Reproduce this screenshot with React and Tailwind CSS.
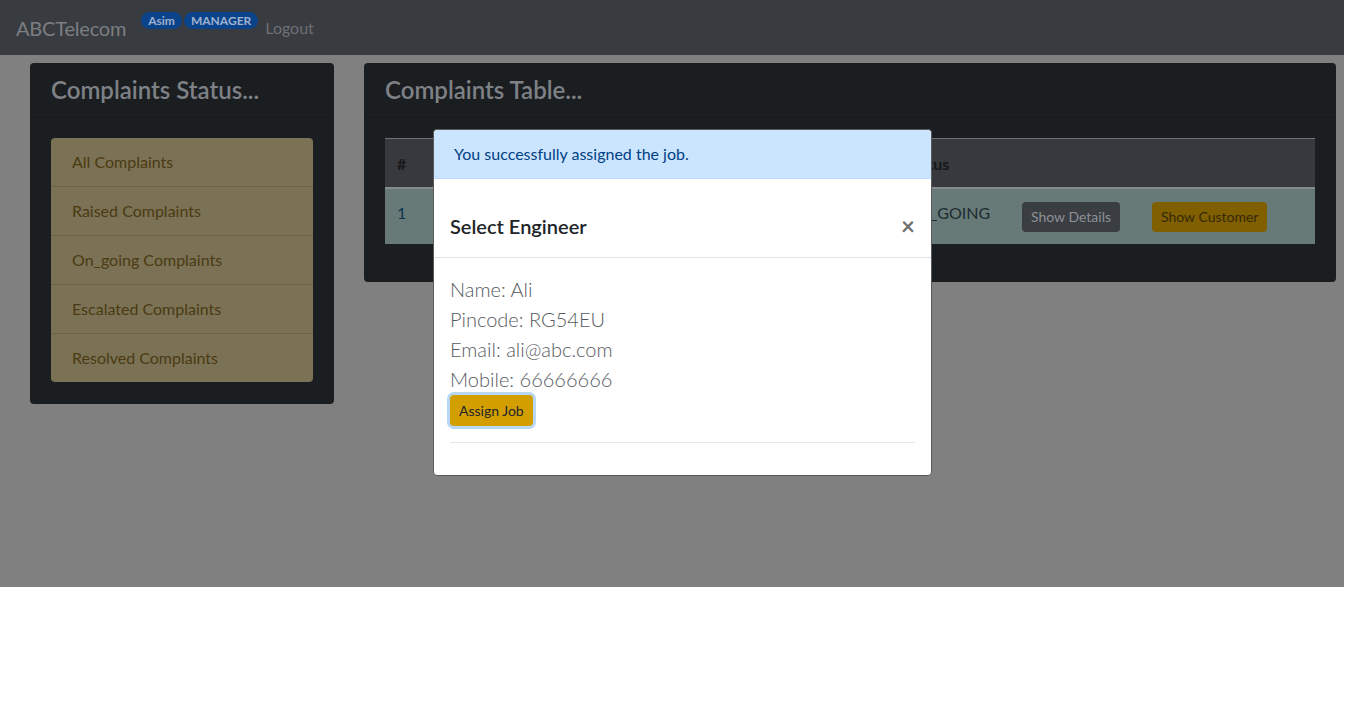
const font = { fontFamily: '"Segoe UI", Lato, "Noto Sans", sans-serif' };

const statuses = [
  "All Complaints",
  "Raised Complaints",
  "On_going Complaints",
  "Escalated Complaints",
  "Resolved Complaints",
];

function Navbar() {
  return (
    <nav className="flex h-[55px] items-center bg-[#383b40] px-4">
      <span className="text-[20px] tracking-[-0.2px] text-[#7c7e82]">ABCTelecom</span>
      <div className="ml-[15px] flex -translate-y-[7px] items-center gap-[2px]">
        <span className="rounded-full bg-[#0b438b] px-[7px] py-[1px] text-[12px] font-bold leading-[15px] text-[#9fb1cf]">
          Asim
        </span>
        <span className="rounded-full bg-[#0b438b] px-[7px] py-[1px] text-[12px] font-bold leading-[15px] text-[#9fb1cf]">
          MANAGER
        </span>
      </div>
      <span className="ml-[7px] text-[16px] text-[#6e7074]">Logout</span>
    </nav>
  );
}

function Card({ title, className = "", children }) {
  return (
    <section className={`rounded-[4px] bg-[#1b1e21] ${className}`}>
      <div className="border-b border-[#17191b] px-[21px] py-[12px]">
        <h4 className="text-[24px] font-semibold leading-[30px] text-[#7e8185]">{title}</h4>
      </div>
      <div className="px-[21px] pt-[20px] pb-[22px]">{children}</div>
    </section>
  );
}

function StatusList() {
  return (
    <ul className="overflow-hidden rounded-[4px] bg-[#7b7155]">
      {statuses.map((s, i) => (
        <li
          key={s}
          className={`px-[21px] py-[12px] text-[16px] leading-[24px] text-[#4a3b12] ${
            i > 0 ? "border-t border-[#6c6449]" : ""
          }`}
        >
          {s}
        </li>
      ))}
    </ul>
  );
}

function ComplaintsTable() {
  return (
    <div className="mb-[16px]">
      <div className="flex h-[49px] items-center border-t border-[#6f7276] bg-[#37393e] pt-[2px] text-[16px] font-bold text-[#161718]">
        <span className="w-[508px] pl-[12px]">#</span>
        <span className="pl-[12px]">Status</span>
      </div>
      <div className="flex h-[57px] border-t-2 border-[#878c8b] bg-[#677a77] text-[16px] leading-[24px]">
        <span className="w-[508px] pl-[12px] pt-[12px] text-[#0d3550]">1</span>
        <span className="w-[117px] pl-[12px] pt-[12px] text-[#1c2b30]">ON_GOING</span>
        <div className="w-[130px] pl-[12px] pt-[13px]">
          <button className="h-[30px] rounded-[4px] bg-[#3a3d42] px-[9px] text-[14px] text-[#8d9196]">
            Show Details
          </button>
        </div>
        <div className="pl-[12px] pt-[13px]">
          <button className="h-[30px] rounded-[4px] bg-[#7f5f00] px-[9px] text-[14px] text-[#35290a]">
            Show Customer
          </button>
        </div>
      </div>
    </div>
  );
}

function EngineerModal() {
  return (
    <div className="absolute left-[433px] top-[129px] w-[499px] rounded-[4px] border border-[#5a5a5a] bg-white">
      <div className="rounded-t-[4px] border-b border-[#b8daff] bg-[#cce5ff] px-[20px] py-[12px] text-[16px] leading-[24px] text-[#004085]">
        You successfully assigned the job.
      </div>
      <div className="mt-[16px] flex items-center justify-between border-b border-[#dee2e6] px-[16px] py-[16px]">
        <h5 className="text-[20px] font-semibold leading-[30px] text-[#212529]">Select Engineer</h5>
        <span className="text-[24px] font-bold leading-[24px] text-[#707070]">×</span>
      </div>
      <div className="p-[16px]">
        <div className="text-[20px] font-light leading-[30px] text-[#565a5e]">
          <p>Name: Ali</p>
          <p>Pincode: RG54EU</p>
          <p>Email: ali@abc.com</p>
          <p>Mobile: 66666666</p>
        </div>
        <button className="mt-[1px] h-[31px] rounded-[4px] bg-[#d39e00] px-[9px] text-[14px] text-[#212529] ring-[3px] ring-[#b7d7f5]">
          Assign Job
        </button>
        <hr className="mt-[16px] mb-[16px] border-t border-[#e6e6e6]" />
      </div>
    </div>
  );
}

export default function App() {
  return (
    <div className="relative h-[727px] w-[1366px] bg-white" style={font}>
      <div className="h-[587px] w-[1344px] bg-[#808080]">
        <Navbar />
        <div className="flex items-start gap-[30px] pl-[30px] pt-[8px]">
          <Card title="Complaints Status..." className="w-[304px]">
            <StatusList />
          </Card>
          <Card title="Complaints Table..." className="w-[972px]">
            <ComplaintsTable />
          </Card>
        </div>
      </div>
      <EngineerModal />
    </div>
  );
}
